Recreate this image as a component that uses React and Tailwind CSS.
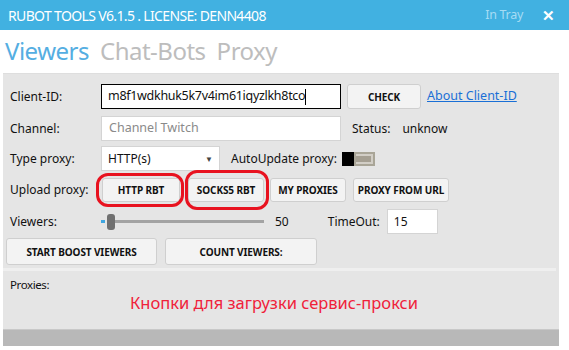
export default function App() {
  const font = { fontFamily: '"Noto Sans", "Open Sans", sans-serif' };
  const btn =
    "flex items-center justify-center whitespace-nowrap bg-[#f3f3f3] border border-[#cfcfcf] rounded-[3px] text-[10px] font-bold text-[#111] leading-none tracking-[-0.1px]";
  return (
    <div className="w-[569px] h-[350px] bg-white overflow-hidden relative" style={font}>
      {/* Title bar */}
      <div className="h-[30px] bg-[#41b1e1] flex items-center pl-[8px] pr-[14px]">
        <span className="text-white text-[14px] tracking-[-0.65px]">RUBOT TOOLS V6.1.5 . LICENSE: DENN4408</span>
        <span className="ml-auto text-[#a6dcf4] text-[12.5px] tracking-[-0.3px]">In Tray</span>
        <span className="ml-[19px] text-white text-[15px] font-bold leading-none">✕</span>
      </div>
      {/* Tabs */}
      <div className="h-[43px] flex items-start pl-[5px] gap-[11px] pt-[4px] whitespace-nowrap">
        <span className="text-[24px] leading-[34px] text-[#55aee2] tracking-[-0.5px]">Viewers</span>
        <span className="text-[24px] leading-[34px] text-[#bdbdbd] tracking-[-0.5px]">Chat-Bots</span>
        <span className="text-[24px] leading-[34px] text-[#bdbdbd] tracking-[-0.5px]">Proxy</span>
      </div>
      {/* Panel */}
      <div className="ml-[3px] w-[556px] bg-[#e5e5e5] flex flex-col text-[12px] text-[#111] whitespace-nowrap">
        <div className="h-[195px] flex flex-col pl-[7px] pt-[10px] border-t border-[#dedede]">
          {/* Row 1 */}
          <div className="flex items-center h-[25px]">
            <span className="w-[91px]">Client-ID:</span>
            <div className="w-[240px] h-[25px] bg-white border border-black flex items-center pl-[6px] text-[12.5px] tracking-[-0.3px]">
              m8f1wdkhuk5k7v4im61iqyzlkh8tco<span className="w-px h-[16px] bg-black"></span>
            </div>
            <div className={btn + " ml-[6px] w-[74px] h-[25px]"}>CHECK</div>
            <span className="ml-[6px] text-[#1a6fd6] underline text-[12.5px]">About Client-ID</span>
          </div>
          {/* Row 2 */}
          <div className="flex items-center h-[25px] mt-[7px]">
            <span className="w-[91px]">Channel:</span>
            <div className="w-[240px] h-[25px] bg-white border border-[#d4d4d4] flex items-center pl-[7px] text-[#8a8a8a] text-[12.5px]">
              Channel Twitch
            </div>
            <span className="ml-[11px]">Status:</span>
            <span className="ml-[12px]">unknow</span>
          </div>
          {/* Row 3 */}
          <div className="flex items-center h-[25px] mt-[5px]">
            <span className="w-[91px]">Type proxy:</span>
            <div className="w-[119px] h-[25px] bg-white border border-[#d4d4d4] flex items-center pl-[6px] pr-[6px]">
              <span>HTTP(s)</span>
              <span className="ml-auto text-[8px] text-[#444]">▼</span>
            </div>
            <span className="ml-[11px]">AutoUpdate proxy:</span>
            <div className="ml-[5px] flex h-[14px]">
              <div className="w-[12px] h-[14px] bg-black"></div>
              <div className="w-[21px] h-[14px] bg-[#a9a597] p-[2px]">
                <div className="w-full h-full border-[2px] border-[#d2cec6] border-l-0 bg-[#a59f92]"></div>
              </div>
            </div>
          </div>
          {/* Row 4 */}
          <div className="flex items-center h-[24px] mt-[7px] relative">
            <span className="w-[92px]">Upload proxy:</span>
            <div className={btn + " w-[78px] h-[24px]"}>HTTP RBT</div>
            <div className={btn + " ml-[8px] w-[76px] h-[24px]"}>SOCKS5 RBT</div>
            <div className={btn + " ml-[6px] w-[76px] h-[24px]"}>MY PROXIES</div>
            <div className={btn + " ml-[7px] w-[96px] h-[24px]"}>PROXY FROM URL</div>
            <div className="absolute left-[86px] top-[-5px] w-[88px] h-[34px] border-[3px] border-[#e8121f] rounded-[12px]"></div>
            <div className="absolute left-[175px] top-[-8px] w-[84px] h-[40px] border-[3px] border-[#e8121f] rounded-[12px]"></div>
          </div>
          {/* Row 5 */}
          <div className="flex items-center h-[25px] mt-[7px]">
            <span className="w-[91px]">Viewers:</span>
            <div className="relative w-[163px] h-[16px] flex items-center">
              <div className="w-[4px] h-[3px] bg-[#3fa6e0]"></div>
              <div className="w-[8px] h-[16px] rounded-[3px] bg-[#707070] ml-[2px]"></div>
              <div className="flex-1 h-[3px] bg-[#a3a3a3]"></div>
            </div>
            <span className="ml-[11px]">50</span>
            <span className="ml-[39px]">TimeOut:</span>
            <div className="ml-[7px] w-[51px] h-[25px] bg-white border border-[#d4d4d4] flex items-center pl-[6px]">15</div>
          </div>
          {/* Row 6 */}
          <div className="flex items-center mt-[4px] -ml-[4px]">
            <div className={btn + " w-[151px] h-[27px]"}>START BOOST VIEWERS</div>
            <div className={btn + " ml-[8px] w-[152px] h-[27px]"}>COUNT VIEWERS:</div>
          </div>
        </div>
        <div className="h-[3px] bg-[#efefef] mr-[3px]"></div>
        <div className="h-[58px] pl-[7px] pt-[6px] flex flex-col">
          <span className="text-[11.5px] tracking-[-0.4px] leading-[16px]">Proxies:</span>
          <span className="ml-[120px] text-[16.5px] text-[#f0213a] leading-[20px]">Кнопки для загрузки сервис-прокси</span>
        </div>
        <div className="h-[17px] bg-[#b8b8b8] border-t border-[#c8c8c8]"></div>
      </div>
    </div>
  );
}
